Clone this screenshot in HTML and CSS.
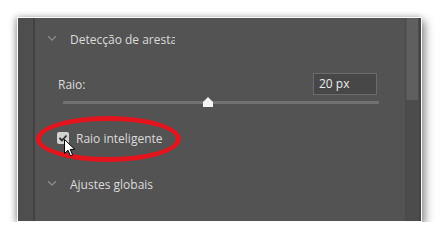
FILE: index.html
```html
<!DOCTYPE html>
<html lang="pt">
<head>
  <meta charset="UTF-8" />
  <title>Detecção de aresta</title>
  <link rel="stylesheet" href="styles.css">
</head>
<body>
  <div class="frame">
    <div class="gutter"></div>
    <div class="panel">
      <div class="section">
        <svg class="chevron" viewBox="0 0 9 6"><path d="M1 1 L4.5 4.5 L8 1" /></svg>
        <span class="title clip">Detecção de aresta</span>
      </div>
      <div class="field">
        <span class="label">Raio:</span>
        <div class="input">20 px</div>
      </div>
      <div class="slider">
        <div class="track"></div>
        <svg class="thumb" viewBox="0 0 10 10"><polygon points="5,0 10,5 10,10 0,10 0,5" /></svg>
      </div>
      <div class="check-row">
        <div class="checkbox">
          <svg viewBox="0 0 12 12"><path d="M2.5 6 L5 8.5 L9.5 3.5" /></svg>
        </div>
        <span class="label">Raio inteligente</span>
      </div>
      <div class="section second">
        <svg class="chevron" viewBox="0 0 9 6"><path d="M1 1 L4.5 4.5 L8 1" /></svg>
        <span class="title">Ajustes globais</span>
      </div>
    </div>
    <div class="scroll">
      <div class="scroll-thumb"></div>
    </div>
  </div>

  <!-- anotação -->
  <div class="ring"></div>
  <svg class="cursor" viewBox="0 0 12 18">
    <path d="M0.5 0.5 L0.5 14.5 L4 11.2 L6.4 16.8 L8.6 15.8 L6.2 10.4 L10.8 10.4 Z" />
  </svg>
</body>
</html>
```

FILE: styles.css
```css
* {
  box-sizing: border-box;
  margin: 0;
  padding: 0;
}
body {
  background: #fff;
  font-family: 'Open Sans', 'Noto Sans', sans-serif;
  font-size: 12px;
  color: #dcdcdc;
}
.frame {
  margin: 17px 0 0 17px;
  width: 405px;
  height: 205px;
  border: 1px solid #fafafa;
  display: flex;
  box-shadow: 3px 4px 9px rgba(0,0,0,0.45), -2px 0 6px rgba(0,0,0,0.25);
}
.gutter {
  width: 17px;
  background: #4e4e4e;
  border-right: 2px solid #424242;
}
.panel {
  flex: 1;
  background: #535353;
}
.scroll {
  width: 16px;
  background: #4c4c4c;
  border-left: 1px solid #4a4a4a;
  border-right: 2px solid #444;
}
.scroll-thumb {
  width: 12px;
  height: 82px;
  background: #5f5f5f;
  border-left: 1px solid #575757;
}
.section {
  height: 42px;
  display: flex;
  align-items: center;
  padding-left: 12px;
}
.section.second {
  height: 20px;
  margin-top: 26px;
}
.chevron {
  width: 10px;
  height: 7px;
  margin-top: -2px;
  fill: none;
  stroke: #8d8d8d;
  stroke-width: 1.2;
}
.title {
  margin-left: 13px;
  white-space: nowrap;
}
.clip {
  width: 105px;
  overflow: hidden;
}
.field {
  margin-top: 13px;
  height: 22px;
  display: flex;
  align-items: center;
  justify-content: space-between;
  padding-left: 23px;
  padding-right: 28px;
}
.input {
  width: 64px;
  height: 22px;
  border: 1px solid #6b6b6b;
  background: #474747;
  color: #ececec;
  padding-left: 5px;
  line-height: 20px;
}
.slider {
  position: relative;
  margin: 2px 26px 0 28px;
  height: 10px;
}
.track {
  position: absolute;
  left: 0;
  right: 0;
  top: 4px;
  height: 3px;
  background: #727272;
  border-radius: 1px;
}
.thumb {
  position: absolute;
  left: 140px;
  top: 0;
  width: 10px;
  height: 10px;
  fill: #f4f4f4;
}
.check-row {
  margin-top: 21px;
  height: 20px;
  display: flex;
  align-items: center;
  padding-left: 22px;
}
.checkbox {
  width: 12px;
  height: 12px;
  background: #d2d2d2;
  border-radius: 2px;
  margin-right: 7px;
}
.checkbox svg {
  display: block;
  width: 12px;
  height: 12px;
  fill: none;
  stroke: #2e2e2e;
  stroke-width: 1.8;
}
.ring {
  position: absolute;
  left: 36px;
  top: 116px;
  width: 145px;
  height: 46px;
  border: 5px solid #e5131b;
  border-radius: 50%;
}
.cursor {
  position: absolute;
  left: 64px;
  top: 139px;
  width: 12px;
  height: 18px;
  fill: #fff;
  stroke: #000;
  stroke-width: 1;
}
```
